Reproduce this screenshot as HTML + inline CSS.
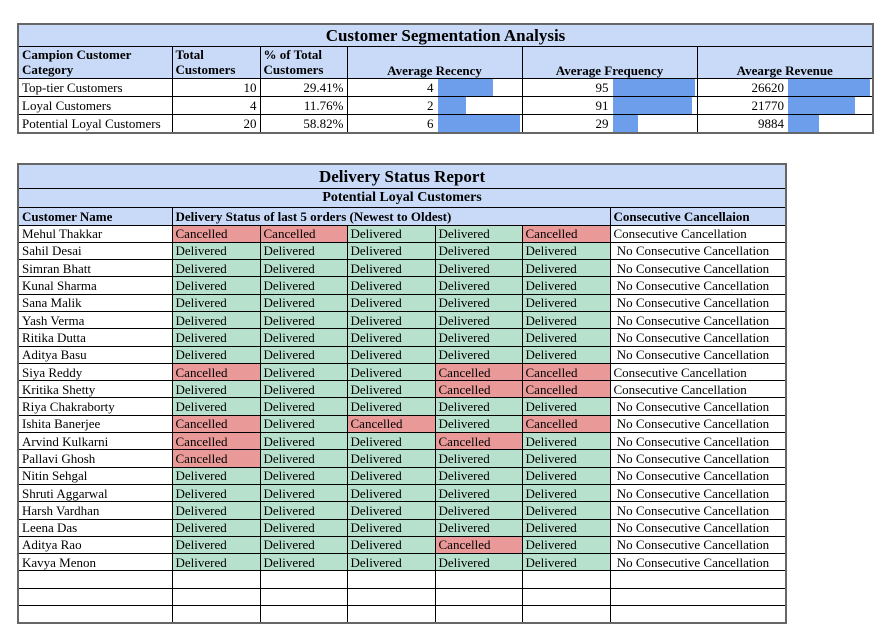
<!DOCTYPE html>
<html><head><meta charset="utf-8"><style>
body{margin:0;background:#fff;font-family:"Liberation Serif","DejaVu Serif",serif;font-size:13px;color:#000}
table{border-collapse:collapse;table-layout:fixed;position:absolute}
td{border:1px solid #000;padding:0 3px;white-space:nowrap;overflow:hidden;line-height:15px}
.h{background:#c9daf8;font-weight:bold}
.t{background:#c9daf8;font-weight:bold;text-align:center}
.r{text-align:right}
.C{background:#ea9999}.D{background:#b7e1cd}
#t1{left:17px;top:23px;width:855px;border:2px solid #666}
#t2{left:17px;top:163px;width:768px;border:2px solid #666}
.bar{position:relative;height:17px;padding:0}
.bar span.n{position:absolute;right:0;top:0;width:80px;text-align:right;line-height:17px}
.bar i{position:absolute;top:0;height:17px;background:#6d9eeb}
#t2 tr{height:17.3px}
</style></head><body>
<table id="t1">
<colgroup><col style="width:154px"><col style="width:88px"><col style="width:87px"><col style="width:175px"><col style="width:175px"><col style="width:176px"></colgroup>
<tr style="height:22px"><td colspan="6" class="t" style="font-size:17px">Customer Segmentation Analysis</td></tr>
<tr style="height:32px"><td class="h">Campion Customer<br>Category</td><td class="h">Total<br>Customers</td><td class="h">% of Total<br>Customers</td><td class="t" style="vertical-align:bottom">Average Recency</td><td class="t" style="vertical-align:bottom">Average Frequency</td><td class="t" style="vertical-align:bottom">Avearge Revenue</td></tr>
<tr style="height:17px"><td>Top-tier Customers</td><td class="r">10</td><td class="r">29.41%</td>
<td class="bar"><span class="n" style="right:88px">4</span><i style="left:90px;width:55px"></i></td>
<td class="bar"><span class="n" style="right:88px">95</span><i style="left:90px;width:82px"></i></td>
<td class="bar"><span class="n" style="right:88px">26620</span><i style="left:90px;width:82px"></i></td></tr>
<tr style="height:17px"><td>Loyal Customers</td><td class="r">4</td><td class="r">11.76%</td>
<td class="bar"><span class="n" style="right:88px">2</span><i style="left:90px;width:28px"></i></td>
<td class="bar"><span class="n" style="right:88px">91</span><i style="left:90px;width:79px"></i></td>
<td class="bar"><span class="n" style="right:88px">21770</span><i style="left:90px;width:67px"></i></td></tr>
<tr style="height:17px"><td>Potential Loyal Customers</td><td class="r">20</td><td class="r">58.82%</td>
<td class="bar"><span class="n" style="right:88px">6</span><i style="left:90px;width:82px"></i></td>
<td class="bar"><span class="n" style="right:88px">29</span><i style="left:90px;width:25px"></i></td>
<td class="bar"><span class="n" style="right:88px">9884</span><i style="left:90px;width:31px"></i></td></tr>
</table>

<table id="t2">
<colgroup><col style="width:154px"><col style="width:88px"><col style="width:87px"><col style="width:88px"><col style="width:87px"><col style="width:88px"><col style="width:176px"></colgroup>
<tr style="height:24px"><td colspan="7" class="t" style="font-size:17px">Delivery Status Report</td></tr>
<tr style="height:19px"><td colspan="7" class="t" style="font-size:14px">Potential Loyal Customers</td></tr>
<tr style="height:18px"><td class="h">Customer Name</td><td class="h" colspan="5">Delivery Status of last 5 orders (Newest to Oldest)</td><td class="h">Consecutive Cancellaion</td></tr>
<tr><td>Mehul Thakkar</td><td class="C">Cancelled</td><td class="C">Cancelled</td><td class="D">Delivered</td><td class="D">Delivered</td><td class="C">Cancelled</td><td>Consecutive Cancellation</td></tr>
<tr><td>Sahil Desai</td><td class="D">Delivered</td><td class="D">Delivered</td><td class="D">Delivered</td><td class="D">Delivered</td><td class="D">Delivered</td><td>&nbsp;No Consecutive Cancellation</td></tr>
<tr><td>Simran Bhatt</td><td class="D">Delivered</td><td class="D">Delivered</td><td class="D">Delivered</td><td class="D">Delivered</td><td class="D">Delivered</td><td>&nbsp;No Consecutive Cancellation</td></tr>
<tr><td>Kunal Sharma</td><td class="D">Delivered</td><td class="D">Delivered</td><td class="D">Delivered</td><td class="D">Delivered</td><td class="D">Delivered</td><td>&nbsp;No Consecutive Cancellation</td></tr>
<tr><td>Sana Malik</td><td class="D">Delivered</td><td class="D">Delivered</td><td class="D">Delivered</td><td class="D">Delivered</td><td class="D">Delivered</td><td>&nbsp;No Consecutive Cancellation</td></tr>
<tr><td>Yash Verma</td><td class="D">Delivered</td><td class="D">Delivered</td><td class="D">Delivered</td><td class="D">Delivered</td><td class="D">Delivered</td><td>&nbsp;No Consecutive Cancellation</td></tr>
<tr><td>Ritika Dutta</td><td class="D">Delivered</td><td class="D">Delivered</td><td class="D">Delivered</td><td class="D">Delivered</td><td class="D">Delivered</td><td>&nbsp;No Consecutive Cancellation</td></tr>
<tr><td>Aditya Basu</td><td class="D">Delivered</td><td class="D">Delivered</td><td class="D">Delivered</td><td class="D">Delivered</td><td class="D">Delivered</td><td>&nbsp;No Consecutive Cancellation</td></tr>
<tr><td>Siya Reddy</td><td class="C">Cancelled</td><td class="D">Delivered</td><td class="D">Delivered</td><td class="C">Cancelled</td><td class="C">Cancelled</td><td>Consecutive Cancellation</td></tr>
<tr><td>Kritika Shetty</td><td class="D">Delivered</td><td class="D">Delivered</td><td class="D">Delivered</td><td class="C">Cancelled</td><td class="C">Cancelled</td><td>Consecutive Cancellation</td></tr>
<tr><td>Riya Chakraborty</td><td class="D">Delivered</td><td class="D">Delivered</td><td class="D">Delivered</td><td class="D">Delivered</td><td class="D">Delivered</td><td>&nbsp;No Consecutive Cancellation</td></tr>
<tr><td>Ishita Banerjee</td><td class="C">Cancelled</td><td class="D">Delivered</td><td class="C">Cancelled</td><td class="D">Delivered</td><td class="C">Cancelled</td><td>&nbsp;No Consecutive Cancellation</td></tr>
<tr><td>Arvind Kulkarni</td><td class="C">Cancelled</td><td class="D">Delivered</td><td class="D">Delivered</td><td class="C">Cancelled</td><td class="D">Delivered</td><td>&nbsp;No Consecutive Cancellation</td></tr>
<tr><td>Pallavi Ghosh</td><td class="C">Cancelled</td><td class="D">Delivered</td><td class="D">Delivered</td><td class="D">Delivered</td><td class="D">Delivered</td><td>&nbsp;No Consecutive Cancellation</td></tr>
<tr><td>Nitin Sehgal</td><td class="D">Delivered</td><td class="D">Delivered</td><td class="D">Delivered</td><td class="D">Delivered</td><td class="D">Delivered</td><td>&nbsp;No Consecutive Cancellation</td></tr>
<tr><td>Shruti Aggarwal</td><td class="D">Delivered</td><td class="D">Delivered</td><td class="D">Delivered</td><td class="D">Delivered</td><td class="D">Delivered</td><td>&nbsp;No Consecutive Cancellation</td></tr>
<tr><td>Harsh Vardhan</td><td class="D">Delivered</td><td class="D">Delivered</td><td class="D">Delivered</td><td class="D">Delivered</td><td class="D">Delivered</td><td>&nbsp;No Consecutive Cancellation</td></tr>
<tr><td>Leena Das</td><td class="D">Delivered</td><td class="D">Delivered</td><td class="D">Delivered</td><td class="D">Delivered</td><td class="D">Delivered</td><td>&nbsp;No Consecutive Cancellation</td></tr>
<tr><td>Aditya Rao</td><td class="D">Delivered</td><td class="D">Delivered</td><td class="D">Delivered</td><td class="C">Cancelled</td><td class="D">Delivered</td><td>&nbsp;No Consecutive Cancellation</td></tr>
<tr><td>Kavya Menon</td><td class="D">Delivered</td><td class="D">Delivered</td><td class="D">Delivered</td><td class="D">Delivered</td><td class="D">Delivered</td><td>&nbsp;No Consecutive Cancellation</td></tr>
<tr><td></td><td></td><td></td><td></td><td></td><td></td><td></td></tr>
<tr><td></td><td></td><td></td><td></td><td></td><td></td><td></td></tr>
<tr><td></td><td></td><td></td><td></td><td></td><td></td><td></td></tr>
</table>
</body></html>
